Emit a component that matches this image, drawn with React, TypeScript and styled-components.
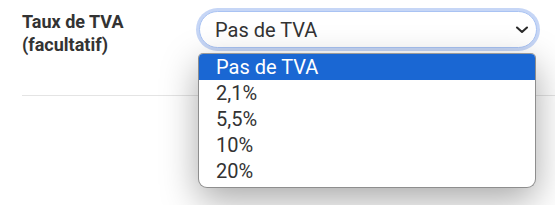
import React from "react";
import styled, { createGlobalStyle } from "styled-components";

const Global = createGlobalStyle`
  html, body { margin: 0; padding: 0; background: #ffffff; }
  body { font-family: Roboto, "Liberation Sans", Arial, sans-serif; color: #333333; }
`;

const Page = styled.div`
  width: 555px;
  height: 205px;
  overflow: hidden;
  padding-left: 22px;
  box-sizing: border-box;
`;

const FormRow = styled.div`
  display: flex;
  align-items: flex-start;
  height: 96px;
  box-sizing: border-box;
  border-bottom: 1px solid #e4e4e4;
  position: relative;
`;

const Label = styled.label`
  width: 177px;
  flex: none;
  padding-top: 10px;
  font-size: 18px;
  font-weight: 700;
  line-height: 23px;
  color: #333333;
`;

const SelectWrap = styled.div`
  position: relative;
  margin-top: 11px;
  width: 338px;
`;

const SelectBox = styled.div`
  box-sizing: border-box;
  height: 37px;
  width: 100%;
  border: 1px solid #a9c3f3;
  border-radius: 19px;
  box-shadow: 0 0 0 3px #c6d6f6;
  display: flex;
  align-items: center;
  justify-content: space-between;
  padding: 0 7px 0 15px;
  font-size: 20px;
  color: #333333;
  background: #ffffff;
`;

const Menu = styled.ul`
  position: absolute;
  left: -1px;
  top: 42px;
  width: 338px;
  margin: 0;
  padding: 0 0 3px;
  list-style: none;
  box-sizing: border-box;
  background: #ffffff;
  border: 1px solid #8e8e8e;
  border-top-color: #9a9a9a;
  border-radius: 5px 5px 9px 9px;
  box-shadow: 0 12px 36px rgba(0, 0, 0, 0.34);
  overflow: hidden;
`;

const Option = styled.li<{ $selected?: boolean }>`
  height: 26px;
  line-height: 26px;
  padding-left: 17px;
  font-size: 20px;
  color: ${(p) => (p.$selected ? "#ffffff" : "#333333")};
  background: ${(p) => (p.$selected ? "#1a67d3" : "transparent")};
`;

const Chevron = () => (
  <svg width="14" height="8" viewBox="0 0 14 8">
    <path d="M2 1.5 L7 6 L12 1.5" fill="none" stroke="#2b2b2b" strokeWidth="2.1" strokeLinecap="round" strokeLinejoin="round" />
  </svg>
);

const options = ["Pas de TVA", "2,1%", "5,5%", "10%", "20%"];

export default function App() {
  return (
    <Page>
      <Global />
      <FormRow>
        <Label>
          Taux de TVA
          <br />
          (facultatif)
        </Label>
        <SelectWrap>
          <SelectBox>
            <span>Pas de TVA</span>
            <Chevron />
          </SelectBox>
          <Menu>
            {options.map((o, i) => (
              <Option key={o} $selected={i === 0}>
                {o}
              </Option>
            ))}
          </Menu>
        </SelectWrap>
      </FormRow>
    </Page>
  );
}
